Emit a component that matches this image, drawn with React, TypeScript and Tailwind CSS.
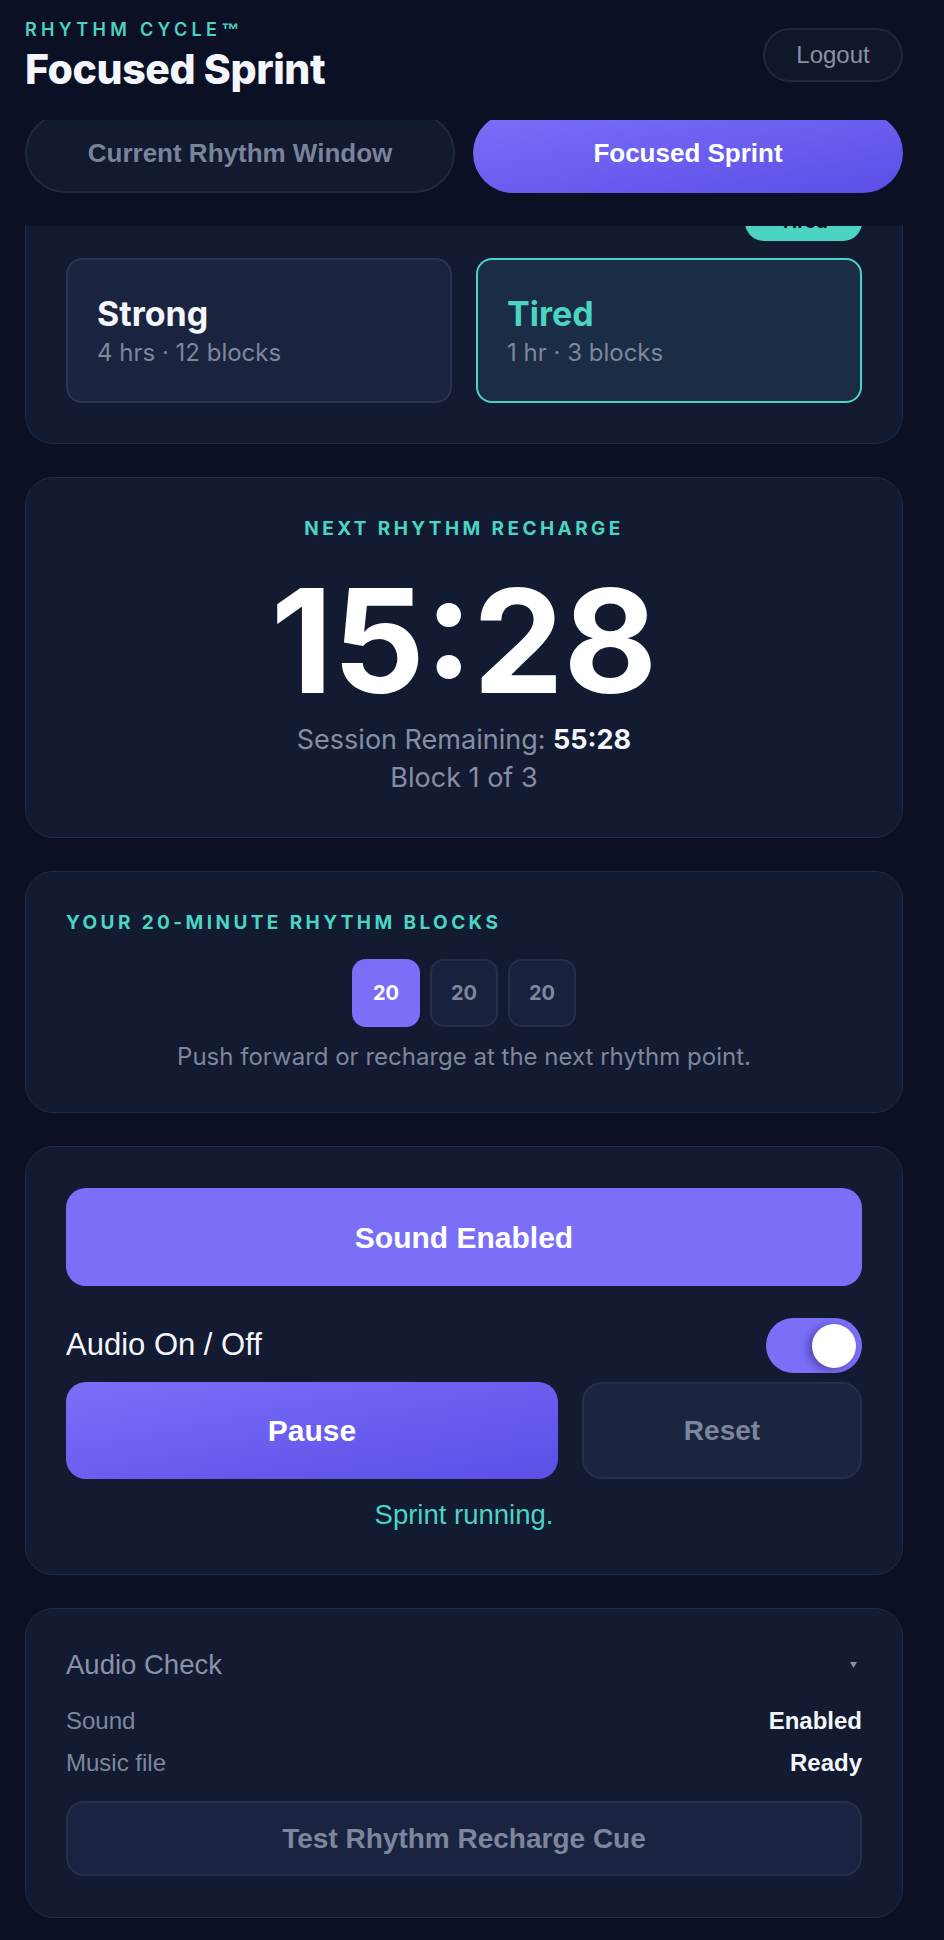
const arial = "font-['Liberation_Sans',Arial,sans-serif]";

const Card = ({ className = "", children }: { className?: string; children: React.ReactNode }) => (
  <div className={`rounded-[28px] border border-[#222b42] bg-[#121b32] px-10 ${className}`}>{children}</div>
);

const Label = ({ children, className = "" }: { children: React.ReactNode; className?: string }) => (
  <div className={`text-[19px] leading-[22px] font-bold tracking-[0.18em] text-[#4cd4c2] ${className}`}>{children}</div>
);

const EnergyOption = ({ title, sub, active }: { title: string; sub: string; active?: boolean }) => (
  <div
    className={`h-[145px] rounded-[16px] border-2 pl-[29px] pt-[34px] ${
      active ? "border-[#4cd4c2] bg-[#1b2d44]" : "border-[#2b3551] bg-[#1b243e]"
    }`}
  >
    <div className={`text-[34px] leading-[40px] font-bold ${active ? "text-[#4cd4c2]" : "text-[#f4f6fc]"}`}>{title}</div>
    <div className="mt-[4px] text-[24px] leading-[30px] text-[#7e879c]">{sub}</div>
  </div>
);

const Row = ({ label, value, className = "" }: { label: string; value: string; className?: string }) => (
  <div className={`${arial} flex items-center justify-between text-[24px] leading-[28px] ${className}`}>
    <span className="text-[#7e879c]">{label}</span>
    <span className="font-bold text-[#f4f6fc]">{value}</span>
  </div>
);

export default function App() {
  return (
    <div className="min-h-screen w-full bg-[#0b1024] font-[Inter,sans-serif] text-[#f4f6fc]">
      {/* Header */}
      <header className="flex h-[120px] items-start justify-between pl-[25px] pr-[41px] pt-[19px]">
        <div>
          <div className="text-[18px] leading-[22px] font-semibold tracking-[0.24em] text-[#4cd4c2]">
            RHYTHM CYCLE<span className={`${arial} tracking-normal`}>™</span>
          </div>
          <h1 className="mt-2 text-[41px] leading-[40px] font-extrabold tracking-[-0.01em]">Focused Sprint</h1>
        </div>
        <button
          className={`${arial} mt-[9px] h-[54px] w-[140px] rounded-full border-2 border-[#1f2840] bg-[#10172b] text-[24px] text-[#8a92a6]`}
        >
          Logout
        </button>
      </header>

      {/* Tabs */}
      <div className="h-[106px] overflow-hidden pl-[25px] pr-[41px]">
        <div className="-mt-[7px] grid grid-cols-2 gap-[18px]">
          <button
            className={`${arial} h-[80px] rounded-full border-2 border-[#1f2840] bg-[#111a2f] text-[26px] font-bold text-[#7a8399]`}
          >
            Current Rhythm Window
          </button>
          <button
            className={`${arial} h-[80px] rounded-full bg-linear-to-br from-[#7b6ff8] to-[#5a4ee6] text-[26px] font-bold text-white`}
          >
            Focused Sprint
          </button>
        </div>
      </div>

      {/* Scrolling content */}
      <div className="flex flex-col gap-[33px] overflow-hidden pl-[25px] pr-[41px] pb-[22px]">
        <Card className="-mt-[64px] pt-10 pb-10">
          <div className="flex h-[38px] items-start justify-between">
            <Label className="pt-[5px]">ENERGY LEVEL</Label>
            <span className="flex h-[38px] w-[117px] items-center justify-center rounded-full bg-[#4cd4c2] text-[19px] font-bold text-[#0b1024]">
              Tired
            </span>
          </div>
          <div className="mt-[17px] grid grid-cols-2 gap-6">
            <EnergyOption title="Strong" sub="4 hrs · 12 blocks" />
            <EnergyOption title="Tired" sub="1 hr · 3 blocks" active />
          </div>
        </Card>

        <Card className="pt-10 pb-10 text-center">
          <Label>NEXT RHYTHM RECHARGE</Label>
          <div className="mt-[29px] text-[144px] leading-[144px] font-bold text-white">15:28</div>
          <div className="mt-2 text-[27px] leading-[38px] text-[#868ea3]">
            Session Remaining: <span className="font-bold text-[#f4f6fc]">55:28</span>
          </div>
          <div className="text-[27px] leading-[38px] text-[#868ea3]">Block 1 of 3</div>
        </Card>

        <Card className="pt-10 pb-[39px]">
          <Label>YOUR 20-MINUTE RHYTHM BLOCKS</Label>
          <div className="mt-[25px] flex justify-center gap-[10px]">
            {[0, 1, 2].map((i) => (
              <div
                key={i}
                className={`flex h-[68px] w-[68px] items-center justify-center rounded-[14px] text-[20px] font-bold ${
                  i === 0 ? "bg-[#7b6ff8] text-white" : "border-2 border-[#262f4a] bg-[#19223c] text-[#7e879c]"
                }`}
              >
                20
              </div>
            ))}
          </div>
          <div className="mt-[14px] text-center text-[24px] leading-[32px] text-[#7e879c]">
            Push forward or recharge at the next rhythm point.
          </div>
        </Card>

        <Card className={`${arial} pt-10 pb-11`}>
          <button className="mt-px h-[98px] w-full rounded-[20px] bg-[#7b6ff8] text-[30px] font-bold text-white">
            Sound Enabled
          </button>
          <div className="mt-[32px] flex h-[55px] items-center justify-between">
            <span className="text-[31px] text-[#f4f6fc]">Audio On / Off</span>
            <div className="flex h-[55px] w-[96px] items-center justify-end rounded-full bg-[#7b6ff8] pr-[6px]">
              <div className="h-[44px] w-[44px] rounded-full bg-white shadow-[-4px_2px_8px_rgba(30,20,90,0.45)]" />
            </div>
          </div>
          <div className="mt-[9px] flex h-[97px] gap-6">
            <button className="flex-1 rounded-[20px] bg-linear-to-br from-[#7b6ff8] to-[#5a4ee6] text-[30px] font-bold text-white">
              Pause
            </button>
            <button className="w-[280px] rounded-[20px] border-2 border-[#262f4a] bg-[#1b2540] text-[28px] font-bold text-[#7d869c]">
              Reset
            </button>
          </div>
          <div className="mt-[20px] text-center text-[27.5px] leading-[31px] text-[#4cd4c2]">Sprint running.</div>
        </Card>

        <Card className={`${arial} pt-10 pb-[41px]`}>
          <div className="flex h-[32px] items-center justify-between">
            <span className="text-[27.5px] text-[#8a92a6]">Audio Check</span>
            <svg width="7" height="6" viewBox="0 0 7 6" className="mr-[5px]">
              <path d="M0 0h7L3.5 6z" fill="#8a92a6" />
            </svg>
          </div>
          <Row label="Sound" value="Enabled" className="mt-[26px]" />
          <Row label="Music file" value="Ready" className="mt-[14px]" />
          <button className="mt-[24px] h-[75px] w-full rounded-[18px] border-2 border-[#262f4a] bg-[#1a2440] text-[28px] font-bold text-[#7d869c]">
            Test Rhythm Recharge Cue
          </button>
        </Card>
      </div>
    </div>
  );
}
